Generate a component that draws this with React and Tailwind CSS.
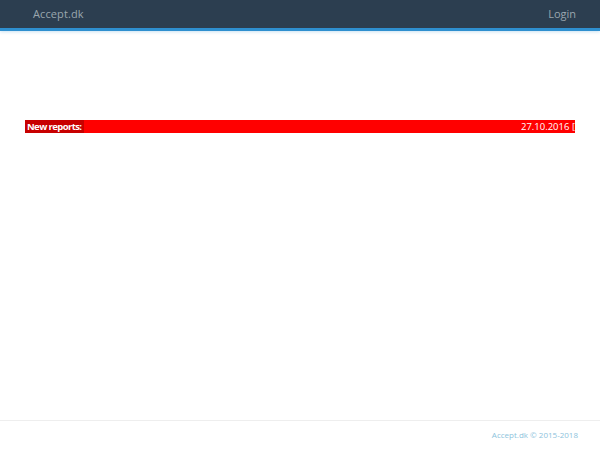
import React from "react";

const App = () => {
  return (
    <div className="min-h-[450px] flex flex-col bg-white" style={{ fontFamily: "'Open Sans', 'Liberation Sans', sans-serif" }}>
      <nav className="h-[31px] bg-[#2c3e50] border-b-[3px] border-[#2e8fcf] shadow-[0_1px_3px_rgba(46,143,207,0.25)]">
        <div className="flex items-center justify-between h-[28px] px-[33px] pr-[24px]">
          <a href="#" className="text-[11px] text-[#9aa6ae] tracking-[0.1px]">
            Accept.dk
          </a>
          <a href="#" className="text-[11px] text-[#9aa6ae]">
            Login
          </a>
        </div>
      </nav>

      <main className="flex-1 px-[25px] pt-[89px]">
        <div className="flex items-center h-[13px] bg-[#ff0000] overflow-hidden">
          <div className="h-full bg-[#c80000] pl-[2px] pr-[3px] flex items-center text-[9.5px] font-bold text-white leading-none tracking-[-0.6px] shrink-0">
            New reports:
          </div>
          <div className="flex-1 flex justify-end text-[9.5px] text-white leading-none whitespace-nowrap">
            <span>27.10.2016 [</span>
          </div>
        </div>
      </main>

      <footer className="h-[30px] border-t border-[#eeeeee] flex items-center justify-end pr-[22px] pb-[2px]">
        <span className="text-[8px] text-[#8ec3dc]">Accept.dk © 2015-2018</span>
      </footer>
    </div>
  );
};

export default App;
